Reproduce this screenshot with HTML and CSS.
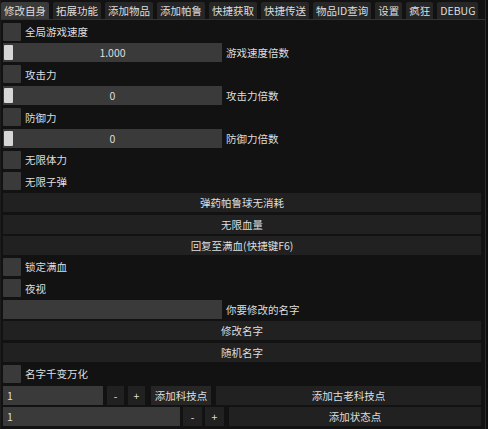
FILE: index.html
```html
<!DOCTYPE html>
<html>
<head>
<meta charset="utf-8">
<link rel="stylesheet" href="styles.css">
</head>
<body>
<div class="win">
  <div class="tabs">
    <div class="tab active">修改自身</div>
    <div class="tab">拓展功能</div>
    <div class="tab">添加物品</div>
    <div class="tab">添加帕鲁</div>
    <div class="tab">快捷获取</div>
    <div class="tab">快捷传送</div>
    <div class="tab">物品ID查询</div>
    <div class="tab">设置</div>
    <div class="tab">疯狂</div>
    <div class="tab">DEBUG</div>
  </div>
  <div class="content">
    <div class="row"><span class="cb"></span><span class="lbl">全局游戏速度</span></div>
    <div class="row"><div class="slider"><span class="grab"></span>1.000</div><span class="lbl">游戏速度倍数</span></div>
    <div class="row"><span class="cb"></span><span class="lbl">攻击力</span></div>
    <div class="row"><div class="slider"><span class="grab"></span>0</div><span class="lbl">攻击力倍数</span></div>
    <div class="row"><span class="cb"></span><span class="lbl">防御力</span></div>
    <div class="row"><div class="slider"><span class="grab"></span>0</div><span class="lbl">防御力倍数</span></div>
    <div class="row"><span class="cb"></span><span class="lbl">无限体力</span></div>
    <div class="row"><span class="cb"></span><span class="lbl">无限子弹</span></div>
    <div class="btn full">弹药帕鲁球无消耗</div>
    <div class="btn full">无限血量</div>
    <div class="btn full">回复至满血(快捷键F6)</div>
    <div class="row"><span class="cb"></span><span class="lbl">锁定满血</span></div>
    <div class="row"><span class="cb"></span><span class="lbl">夜视</span></div>
    <div class="row"><div class="input w219"></div><span class="lbl">你要修改的名字</span></div>
    <div class="btn full">修改名字</div>
    <div class="btn full">随机名字</div>
    <div class="row"><span class="cb"></span><span class="lbl">名字千变万化</span></div>
    <div class="row">
      <div class="input w100">1</div>
      <div class="btn sm gap4">-</div>
      <div class="btn sm gap4">+</div>
      <div class="btn mid">添加科技点</div>
      <div class="btn grow">添加古老科技点</div>
    </div>
    <div class="row">
      <div class="input w177">1</div>
      <div class="btn sm2">-</div>
      <div class="btn sm2">+</div>
      <div class="btn grow">添加状态点</div>
    </div>
  </div>
</div>
</body>
</html>
```
FILE: styles.css
```css
* { box-sizing: border-box; }
html, body {
  margin: 0;
  padding: 0;
  background: #0e0e0e;
}
body {
  font-family: "Noto Sans CJK SC", "Noto Sans", sans-serif;
  font-size: 10.5px;
  color: #dedede;
}
.win {
  width: 486px;
  height: 429px;
  background: #121212;
  border-left: 1px solid #1c1c1c;
  border-right: 1px solid #2c2c2c;
  overflow: hidden;
}
.tabs {
  display: flex;
  gap: 4px;
  padding: 2px 0 0 0;
  border-bottom: 1px solid #333333;
}
.tab {
  height: 17px;
  line-height: 17px;
  padding: 0 3px;
  background: #262626;
  border-radius: 2px 2px 0 0;
  white-space: nowrap;
}
.tab.active {
  background: #3a3a3a;
}
.content {
  display: flex;
  flex-direction: column;
  gap: 2.4px;
  padding: 2px 4px 0 2px;
}
.row {
  display: flex;
  align-items: center;
  height: 19px;
}
.cb {
  width: 18px;
  height: 18px;
  background: #3a3a3a;
  border-radius: 1px;
  flex: none;
}
.lbl {
  margin-left: 4px;
  white-space: nowrap;
}
.slider {
  position: relative;
  width: 219px;
  height: 19px;
  line-height: 19px;
  background: #3a3a3a;
  text-align: center;
  flex: none;
}
.grab {
  position: absolute;
  left: 1px;
  top: 2px;
  width: 9px;
  height: 15px;
  background: #d6d6d6;
  border-radius: 1px;
}
.input {
  height: 19px;
  line-height: 19px;
  background: #3a3a3a;
  padding-left: 4px;
  flex: none;
}
.w219 { width: 219px; }
.w100 { width: 100px; }
.w177 { width: 177px; }
.btn {
  height: 19px;
  line-height: 19px;
  background: #212121;
  text-align: center;
  white-space: nowrap;
}
.btn.full { width: 478px; }
.btn.sm { width: 17px; margin-left: 4px; flex: none; }
.btn.sm2 { width: 19px; margin-left: 3px; flex: none; }
.btn.sm2 + .btn.sm2 { margin-left: 3px; }
.btn.mid { width: 60px; margin-left: 6px; background: #262626; flex: none; }
.btn.grow { flex: 1; margin-left: 5px; }
.row .btn.sm2 + .btn.grow { margin-left: 5px; }
```
